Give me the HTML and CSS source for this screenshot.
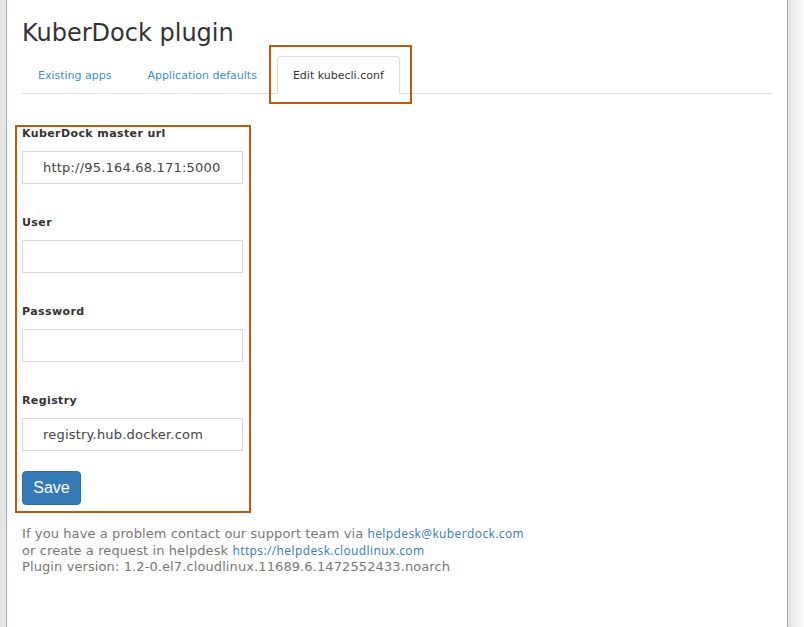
FILE: index.html
```html
<!DOCTYPE html>
<html>
<head>
<meta charset="utf-8">
<title>KuberDock plugin</title>
<link rel="stylesheet" href="styles.css">
</head>
<body>
<div class="gutter-left"></div>
<div class="frame">
  <h1 class="title">KuberDock plugin</h1>
  <div class="tabs-wrap">
    <ul class="tabs">
      <li class="tab"><a href="#">Existing apps</a></li>
      <li class="tab"><a href="#">Application defaults</a></li>
      <li class="tab active"><a href="#">Edit kubecli.conf</a></li>
    </ul>
    <div class="mark mark-tab"></div>
  </div>
  <form class="form">
    <div class="group">
      <label class="label">KuberDock master url</label>
      <input class="input" type="text" value="http://95.164.68.171:5000">
    </div>
    <div class="group">
      <label class="label">User</label>
      <input class="input" type="text" value="">
    </div>
    <div class="group">
      <label class="label">Password</label>
      <input class="input" type="password" value="">
    </div>
    <div class="group">
      <label class="label">Registry</label>
      <input class="input" type="text" value="registry.hub.docker.com">
    </div>
    <button class="btn" type="button">Save</button>
  </form>
  <div class="footer">
    <div>If you have a problem contact our support team via <a class="flink" href="#">helpdesk@kuberdock.com</a></div>
    <div>or create a request in helpdesk <a class="flink" href="#">https://helpdesk.cloudlinux.com</a></div>
    <div>Plugin version: 1.2-0.el7.cloudlinux.11689.6.1472552433.noarch</div>
  </div>
</div>
<div class="gutter-right"></div>
</body>
</html>
```

FILE: styles.css
```css
html, body {
  margin: 0;
  padding: 0;
  height: 100%;
}
body {
  display: flex;
  font-family: "DejaVu Sans", Verdana, sans-serif;
  color: #333;
  background: #fff;
  overflow: hidden;
}
.gutter-left {
  width: 6px;
  background: #e6e6e6;
  flex: none;
}
.gutter-right {
  width: 16px;
  flex: none;
  background: linear-gradient(to right, #e4e4e4, #fbfbfb);
}
.frame {
  flex: 1;
  background: #fff;
  border-left: 1px solid #8fa9c8;
  border-right: 1px solid #8fa9c8;
  padding: 0 15px;
}
.title {
  margin: 0;
  padding-top: 17px;
  font-size: 24px;
  font-weight: normal;
  line-height: 32px;
  color: #333;
}
.tabs-wrap {
  position: relative;
  margin-top: 7px;
}
.tabs {
  list-style: none;
  margin: 0;
  padding: 0;
  display: flex;
  gap: 4px;
  border-bottom: 1px solid #ddd;
}
.tab {
  margin-bottom: -1px;
}
.tab a {
  display: block;
  padding: 11px 15px 10px;
  line-height: 15px;
  font-size: 11px;
  color: #3a8fd3;
  text-decoration: none;
  border: 1px solid transparent;
  border-radius: 4px 4px 0 0;
}
.tab.active a {
  color: #333;
  background: #fff;
  border-color: #ddd #ddd transparent;
}
.mark {
  position: absolute;
  border: 2px solid #bb5c0c;
  box-sizing: border-box;
}
.mark-tab {
  left: 247px;
  top: -11px;
  width: 143px;
  height: 59px;
}
.form {
  margin: 31px 0 0 -7px;
  width: 236px;
  height: 388px;
  box-sizing: border-box;
  border: 2px solid #bb5c0c;
  padding: 0 8px 0 5px;
  display: flex;
  flex-direction: column;
  gap: 32px;
}
.group {
  display: flex;
  flex-direction: column;
  flex: none;
}
.label {
  font-size: 11px;
  font-weight: bold;
  letter-spacing: 0.4px;
  line-height: 13px;
  margin-bottom: 11px;
  color: #333;
}
.input {
  width: 221px;
  height: 33px;
  box-sizing: border-box;
  border: 1px solid #dadada;
  padding: 0 10px 0 20px;
  font-family: "DejaVu Sans", Verdana, sans-serif;
  font-size: 13px;
  letter-spacing: 0.2px;
  color: #444;
  outline: none;
}
.btn {
  align-self: flex-start;
  flex: none;
  margin-top: -12px;
  width: 59px;
  height: 34px;
  background: #337ab7;
  border: 1px solid #2e6da4;
  border-radius: 4px;
  color: #fff;
  font-family: "Liberation Sans", Arial, sans-serif;
  font-size: 16px;
  padding: 0;
}
.footer {
  margin-top: 13px;
  font-size: 13px;
  letter-spacing: 0.1px;
  line-height: 16.5px;
  color: #777;
}
.flink {
  font-family: "Open Sans", "DejaVu Sans", sans-serif;
  font-size: 12px;
  letter-spacing: 0.4px;
  color: #337ab7;
  text-decoration: none;
}
```
